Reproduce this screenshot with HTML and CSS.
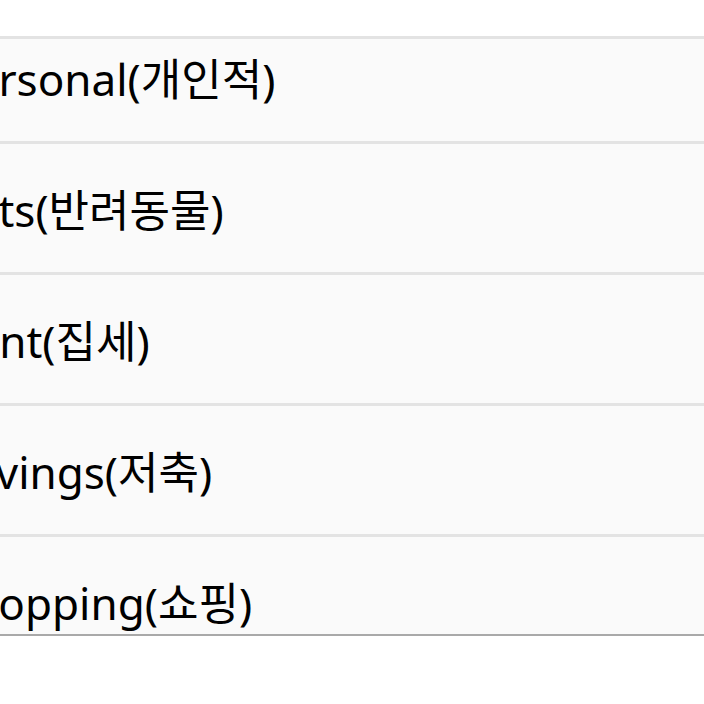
FILE: index.html
```html
<!DOCTYPE html>
<html lang="ko">
<head>
    <meta charset="UTF-8">
    <meta name="viewport" content="width=device-width, initial-scale=1.0">
    <title>Categories</title>
    <link rel="stylesheet" href="styles.css">
</head>
<body>
    <div class="list">
        <div class="rows">
            <div class="row"><span class="label">Personal(<span class="ko">개인적</span>)</span></div>
            <div class="row"><span class="label">Pets(<span class="ko">반려동물</span>)</span></div>
            <div class="row"><span class="label">Rent(<span class="ko">집세</span>)</span></div>
            <div class="row"><span class="label">Savings(<span class="ko">저축</span>)</span></div>
            <div class="row"><span class="label">Shopping(<span class="ko">쇼핑</span>)</span></div>
        </div>
    </div>
</body>
</html>
```

FILE: styles.css
```css
body {
    margin: 0;
    background: #ffffff;
    font-family: 'Noto Sans', 'Noto Sans CJK KR', sans-serif;
    color: #000000;
}
.list {
    margin-top: 36px;
    height: 595px;
    overflow: hidden;
    background: #fafafa;
    border-top: 3px solid #e3e3e3;
    border-bottom: 2px solid #a9a9a9;
}
.rows {
    margin-top: -26px;
}
.row {
    height: 128px;
    display: flex;
    align-items: center;
    border-bottom: 3px solid #e3e3e3;
    font-size: 44px;
    white-space: nowrap;
}
.label {
    margin-left: -53px;
}
.ko {
    font-family: 'Noto Sans CJK KR', sans-serif;
    font-size: 44px;
}
```
